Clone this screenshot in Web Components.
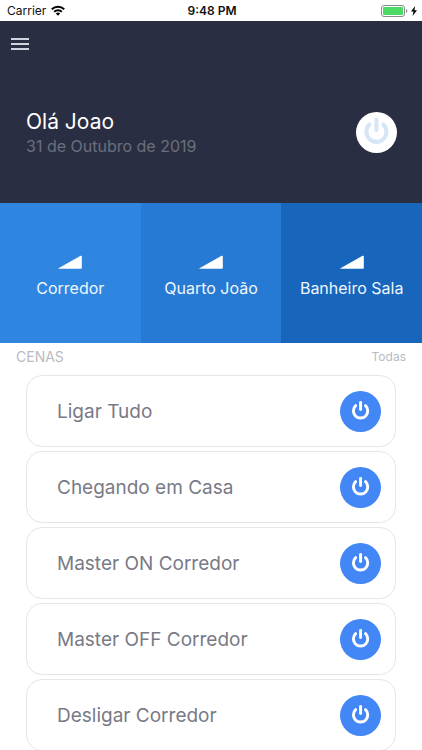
<!DOCTYPE html>
<html lang="pt-BR">
<head>
<meta charset="utf-8">
<meta name="viewport" content="width=device-width, initial-scale=1">
<title>Casa</title>
<style>
html, body { margin: 0; height: 100%; }
body { background: #fff; font-family: Inter, "Liberation Sans", sans-serif; overflow: hidden; }
</style>
</head>
<body>
<home-app></home-app>
<script>
const define = (name, html) => customElements.define(name, class extends HTMLElement {
  connectedCallback() {
    if (this.shadowRoot) return;
    const t = document.createElement('template');
    t.innerHTML = typeof html === 'function' ? html(this) : html;
    this.attachShadow({ mode: 'open' }).append(t.content.cloneNode(true));
  }
});

define('status-bar', `
<style>
:host { display: grid; grid-template-columns: 1fr auto 1fr; align-items: center; height: 21px; padding: 0 5px 0 7px; background: #fff; color: #111; font-size: 12px; line-height: 20px; }
.left, .right { display: flex; align-items: center; gap: 5px; }
.right { justify-content: flex-end; gap: 3px; }
.time { font-weight: 600; }
svg { display: block; }
</style>
<div class="left"><span>Carrier</span>
<svg width="14" height="11" viewBox="0 0 14 11" aria-hidden="true"><g fill="none" stroke="#000" stroke-width="2"><path d="M.8 4.3a8.8 8.8 0 0 1 12.4 0"/><path d="M3.2 6.8a5.4 5.4 0 0 1 7.6 0"/></g><path d="M4.8 8.5a3.1 3.1 0 0 1 4.4 0L7 10.8z"/></svg></div>
<span class="time">9:48 PM</span>
<div class="right">
<svg width="27" height="12" viewBox="0 0 27 12" aria-hidden="true"><rect x=".5" y=".5" width="23" height="11" rx="2.5" fill="#fff" stroke="#8b8b8b"/><rect x="2" y="2" width="20" height="8" rx="1" fill="#4cd964"/><path d="M25 4v4q1.300-.6 1.300-2T25 4z" fill="#8b8b8b"/></svg>
<svg width="6" height="10" viewBox="0 0 6 10" aria-hidden="true"><path d="M4.200 0 0 5.600h2.500L1.600 10 6 4.200H3.400z"/></svg>
</div>`);

define('power-button', el => `
<style>
:host { display: block; flex: none; --disc: #4287f5; --ink: #fff; --glyph: 20px; }
:host([tone="light"]) { --disc: #fff; --ink: #d5e6f7; --glyph: 28px; }
button { display: grid; place-items: center; width: 41px; height: 41px; padding: 0; border: 0; border-radius: 50%; background: var(--disc); cursor: pointer; }
svg { display: block; width: var(--glyph); height: var(--glyph); fill: none; stroke: var(--ink); stroke-width: 3.500; stroke-linecap: round; overflow: visible; }
</style>
<button type="button" aria-label="${el.getAttribute('label')}"><svg viewBox="0 0 24 24"><path d="M11.500 1.600v8.600"/><path d="M5.600 5.600a8.600 8.600 0 1 0 11.800 0"/></svg></button>`);

define('home-header', `
<style>
:host { display: block; padding: 11px 26px 47px; background: #2a2e43; }
.menu { display: grid; place-items: center; width: 24px; height: 24px; margin-left: -18px; padding: 0; border: 0; background: none; cursor: pointer; }
.menu svg { display: block; }
.hello { display: flex; align-items: center; justify-content: space-between; margin-top: 52px; }
h1 { margin: 0; font-size: 21px; line-height: 28px; font-weight: 400; color: #fff; }
p { margin: 0; font-size: 16px; line-height: 20px; color: #6b6e7d; }
power-button { margin-right: -1px; }
</style>
<button class="menu" type="button" aria-label="Menu"><svg width="20" height="14" viewBox="0 0 20 14"><path d="M1 2h18M1 7h18M1 12h18" stroke="#d0d2df" stroke-width="2"/></svg></button>
<div class="hello"><div><h1>Olá Joao</h1><p>31 de Outubro de 2019</p></div>
<power-button tone="light" label="Desligar casa"></power-button></div>`);

define('room-tile', `
<style>
:host { display: block; flex: 1 1 0; min-width: 0; }
button { display: flex; flex-direction: column; align-items: center; justify-content: center; gap: 8px; width: 100%; height: 140px; padding: 7px 0 0; border: 0; background: var(--tile); color: #eef6ff; font: 400 16px/22px Inter, "Liberation Sans", sans-serif; white-space: nowrap; cursor: pointer; }
svg { display: block; }
</style>
<button type="button"><svg width="26" height="14" viewBox="0 0 26 14" aria-hidden="true"><path d="M1.500 13.200 23.600.8q1.200-.5 1.200.7v11.200q0 1-1 1H1.600q-.6-.1-.1-.5z" fill="#fff"/></svg><slot></slot></button>`);

define('scene-card', el => `
<style>
:host { display: flex; align-items: center; justify-content: space-between; box-sizing: border-box; min-height: 72px; padding: 0 14px 0 30px; border: 1px solid #e6e6e8; border-radius: 16px; background: #fff; color: #787a86; font-size: 19px; line-height: 24px; }
.name { padding-top: 2px; }
</style>
<span class="name"><slot></slot></span><power-button label="${el.textContent}"></power-button>`);

define('section-head', `
<style>
:host { display: flex; align-items: center; justify-content: space-between; padding: 3px 16px 7px; line-height: 22px; }
h2 { margin: 0; font-size: 14px; font-weight: 400; color: #b9bac2; }
a { font-size: 12px; line-height: 20px; color: #b9bac2; text-decoration: none; }
</style>
<h2><slot></slot></h2><a href="#todas">Todas</a>`);

define('home-app', `
<style>
:host { display: flex; flex-direction: column; height: 100vh; overflow: hidden; }
status-bar, home-header, .rooms, section-head { flex: none; }
.rooms { display: flex; }
.scenes { flex: 1; min-height: 0; display: flex; flex-direction: column; gap: 4px; padding: 0 26px; overflow-y: auto; scrollbar-width: none; }
scene-card { flex: none; }
</style>
<status-bar></status-bar>
<home-header></home-header>
<nav class="rooms" aria-label="Ambientes">
<room-tile style="--tile:#2e86e0">Corredor</room-tile><room-tile style="--tile:#277ad3">Quarto João</room-tile><room-tile style="--tile:#1766bb">Banheiro Sala</room-tile>
</nav>
<section-head>CENAS</section-head>
<main class="scenes">
<scene-card>Ligar Tudo</scene-card><scene-card>Chegando em Casa</scene-card><scene-card>Master ON Corredor</scene-card><scene-card>Master OFF Corredor</scene-card><scene-card>Desligar Corredor</scene-card>
</main>`);
</script>
</body>
</html>
